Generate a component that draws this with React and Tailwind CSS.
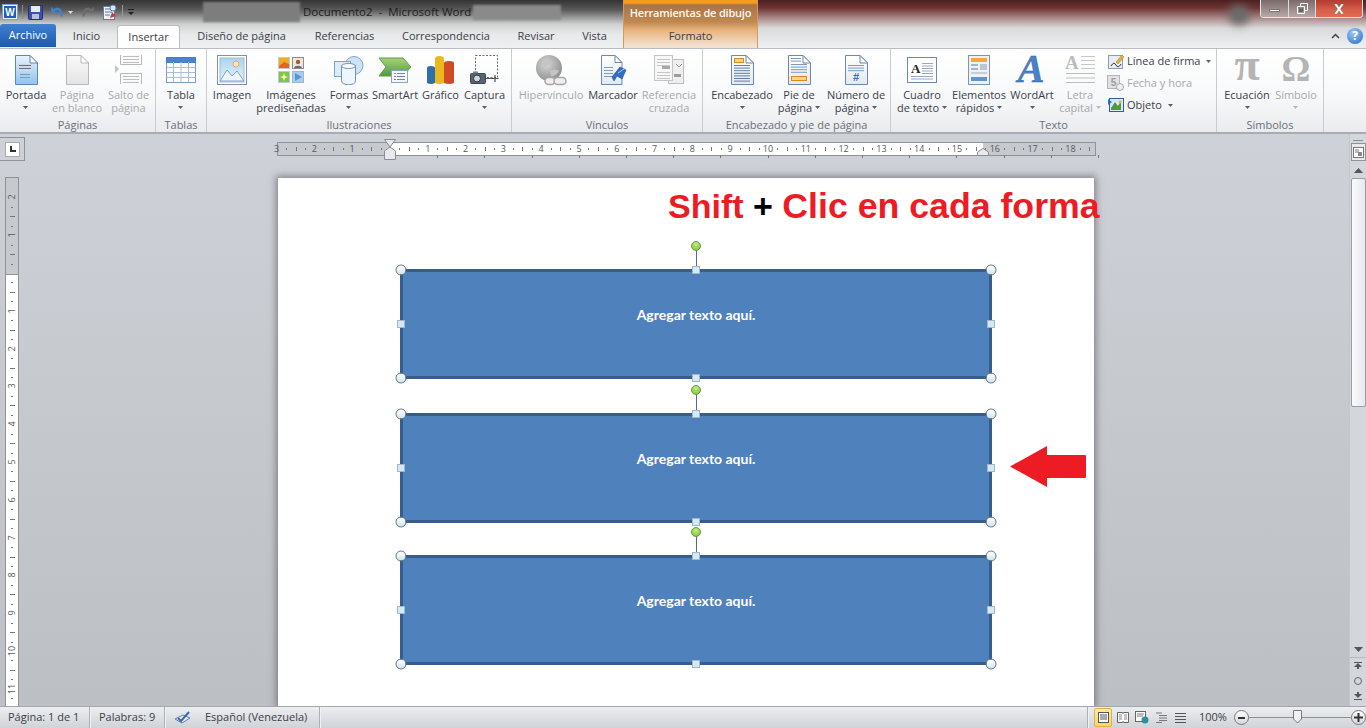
import React from 'react';

const Caret = ({ dim }) => (
  <svg width="5" height="3" viewBox="0 0 5 3" className="inline-block shrink-0">
    <path d="M0 0H5L2.5 3Z" fill={dim ? '#b5b8bc' : '#5a5f66'} />
  </svg>
);

const Defs = () => (
  <svg className="absolute w-0 h-0">
    <defs>
      <linearGradient id="blue" x1="0" y1="0" x2="0" y2="1"><stop offset="0" stopColor="#e6f3fd" /><stop offset="1" stopColor="#8fc4ee" /></linearGradient>
      <linearGradient id="page" x1="0" y1="0" x2="0" y2="1"><stop offset="0" stopColor="#ffffff" /><stop offset="1" stopColor="#e4e9f1" /></linearGradient>
      <linearGradient id="gray" x1="0" y1="0" x2="0" y2="1"><stop offset="0" stopColor="#fafafa" /><stop offset="1" stopColor="#e4e4e4" /></linearGradient>
      <linearGradient id="sky" x1="0" y1="0" x2="0" y2="1"><stop offset="0" stopColor="#a9d3f3" /><stop offset="1" stopColor="#e9f4fc" /></linearGradient>
      <linearGradient id="green" x1="0" y1="0" x2="0" y2="1"><stop offset="0" stopColor="#a8d27a" /><stop offset="1" stopColor="#4f9a3c" /></linearGradient>
      <radialGradient id="globe" cx="0.4" cy="0.35" r="0.7"><stop offset="0" stopColor="#d6d6d6" /><stop offset="1" stopColor="#8d8d8d" /></radialGradient>
    </defs>
  </svg>
);

const Lines = ({ x, y, w, n, gap = 3, color = '#7d8ea6' }) => (
  <>
    {Array.from({ length: n }).map((_, i) => (
      <path key={i} d={`M${x} ${y + i * gap + 0.5}h${w}`} stroke={color} />
    ))}
  </>
);

const Doc = ({ fill = 'url(#page)', stroke = '#6f87a8', children }) => (
  <svg width="24" height="30" viewBox="0 0 24 30">
    <path d="M1.5.5H16L23.5 8V29.5H1.5Z" fill={fill} stroke={stroke} />
    <path d="M16 .5V8H23.5Z" fill="#fff" stroke={stroke} />
    {children}
  </svg>
);

const PortadaIcon = () => (
  <Doc fill="url(#blue)" stroke="#5d88b5">
    <rect x="4" y="9" width="14" height="7" fill="#cfd8e4" />
    <Lines x={5} y={10} w={12} n={2} color="#5b7394" />
    <Lines x={6} y={19} w={10} n={2} color="#7a98bb" />
  </Doc>
);

const BlankIcon = () => <Doc fill="url(#gray)" stroke="#b9b9b9" />;

const BreakIcon = () => (
  <svg width="28" height="30" viewBox="0 0 28 30">
    <path d="M5.5 0V9.5H26.5V0" fill="#fafafa" stroke="#b8b8b8" />
    <Lines x={8} y={1} w={16} n={3} color="#bdbdbd" />
    <path d="M5.5 29V18.5H26.5V29" fill="#fafafa" stroke="#b8b8b8" />
    <Lines x={8} y={21} w={16} n={3} color="#bdbdbd" />
    <path d="M0 10L4 14L0 18Z" fill="#b9c4d0" />
  </svg>
);

const TableIcon = () => (
  <svg width="30" height="26" viewBox="0 0 30 26">
    <rect x=".5" y=".5" width="29" height="25" fill="#fff" stroke="#7d9cc4" />
    <rect x=".5" y=".5" width="29" height="5" fill="#4a84d0" stroke="#4a7cc0" />
    <path d="M.5 10.5H29.5M.5 15.5H29.5M.5 20.5H29.5M7.5 5V25M15 5V25M22.5 5V25" stroke="#a8bdd8" fill="none" />
  </svg>
);

const PictureIcon = () => (
  <svg width="30" height="30" viewBox="0 0 30 30">
    <rect x=".5" y=".5" width="29" height="29" fill="#fff" stroke="#7f93ad" />
    <rect x="3" y="3" width="24" height="24" fill="url(#sky)" stroke="#a3bcd6" />
    <circle cx="19" cy="9" r="3" fill="#fbe3c4" stroke="#e6a868" />
    <path d="M3 26L10 15L15 21L20 16L27 26Z" fill="#eef5fb" stroke="#7fa3c8" />
  </svg>
);

const ClipIcon = () => (
  <svg width="26" height="26" viewBox="0 0 26 26">
    <rect x=".5" y=".5" width="11" height="11" fill="#f4a92e" stroke="#c9c9c9" />
    <path d="M1 9L6 5L11 7V11H1Z" fill="#e8641c" />
    <rect x="14.5" y=".5" width="11" height="11" fill="#efe6dc" stroke="#8d8d8d" />
    <circle cx="20" cy="5" r="2.2" fill="#a85a38" />
    <path d="M16 11C16 8 24 8 24 11Z" fill="#6a6a8a" />
    <rect x=".5" y="14.5" width="11" height="11" fill="#7dc44c" stroke="#c9c9c9" />
    <path d="M6 16L7 19L10 20L7 21L6 24L5 21L2 20L5 19Z" fill="#fff7a8" />
    <rect x="14.5" y="14.5" width="11" height="11" fill="#a9cdf0" stroke="#9ab8d8" />
    <path d="M17 16L24 20L17 24Z" fill="#5a94d8" />
  </svg>
);

const ShapesIcon = () => (
  <svg width="30" height="29" viewBox="0 0 30 29">
    <circle cx="20" cy="9.5" r="9" fill="#cfe3f6" stroke="#7ba3cc" />
    <rect x=".5" y="5.5" width="16" height="15" fill="#dcebf8" stroke="#7ba3cc" />
    <path d="M7.5 10V25C7.5 30 21.5 30 21.5 25V10Z" fill="#eef6fc" stroke="#6b93bd" />
    <ellipse cx="14.5" cy="10" rx="7" ry="2.5" fill="#fff" stroke="#6b93bd" />
  </svg>
);

const SmartArtIcon = () => (
  <svg width="32" height="26" viewBox="0 0 32 26">
    <path d="M0 1H24L32 10L24 19H0L7 10Z" fill="url(#green)" stroke="#5d9a48" />
    <rect x="12.5" y="13.5" width="16" height="12" fill="#f4f7fb" stroke="#8ea3bc" />
    <Lines x={18} y={16} w={8} n={3} color="#6f87a8" />
    <Lines x={15} y={16} w={2} n={3} color="#6f87a8" />
  </svg>
);

const ChartIcon = () => (
  <svg width="29" height="30" viewBox="0 0 29 30">
    <path d="M1 13Q1 11 4.5 11Q9 11 9 13V28Q5 30 1 28Z" fill="#2f6ea8" />
    <path d="M9 4Q9 1 13.5 1Q18 1 18 4V28Q13.5 30 9 28Z" fill="#e8b81c" />
    <path d="M18 8Q18 6 23 6Q28 6 28 8V28Q23 30 18 28Z" fill="#cf4a26" />
  </svg>
);

const CaptureIcon = () => (
  <svg width="29" height="30" viewBox="0 0 29 30">
    <rect x="5.5" y=".5" width="22" height="22" fill="none" stroke="#6b6b6b" strokeDasharray="2 1.5" />
    <rect x=".5" y="18.5" width="15" height="10" rx="1" fill="#5a6470" stroke="#3e464e" />
    <circle cx="7" cy="23.5" r="3.5" fill="#cfd6de" stroke="#2c3238" />
    <rect x="3" y="16.5" width="5" height="2" fill="#7a838c" />
    <path d="M16 23.5H25M25 20V27M21 23.5H28.5" stroke="#555" strokeWidth="1.2" />
  </svg>
);

const LinkIcon = () => (
  <svg width="31" height="31" viewBox="0 0 31 31">
    <circle cx="13" cy="13" r="13" fill="url(#globe)" />
    <path d="M6 8Q12 4 16 7Q12 11 8 12ZM14 16Q20 13 23 16Q19 22 15 21Z" fill="#c4c4c4" />
    <rect x="9" y="22.5" width="10" height="7" rx="3.5" fill="#eee" stroke="#a6a6a6" strokeWidth="1.5" />
    <rect x="18" y="22.5" width="12" height="7" rx="3.5" fill="#eee" stroke="#a6a6a6" strokeWidth="1.5" />
  </svg>
);

const BookmarkIcon = () => (
  <svg width="27" height="30" viewBox="0 0 27 30">
    <path d="M1.5.5H15L22 7.5V29.5H1.5Z" fill="url(#page)" stroke="#6f87a8" />
    <path d="M15 .5V7.5H22Z" fill="#fff" stroke="#6f87a8" />
    <Lines x={4} y={12} w={9} n={4} gap={3} color="#7d9ac0" />
    <path d="M12 22L20 12L26 15L22 24L17 21L14 26Z" fill="#2f6fc4" stroke="#1d4f96" strokeWidth=".6" />
    <path d="M18 18L24 14" stroke="#a9d0f5" />
  </svg>
);

const CrossRefIcon = () => (
  <svg width="30" height="30" viewBox="0 0 30 30">
    <rect x="14.5" y="4.5" width="15" height="24" fill="#efefef" stroke="#bdbdbd" />
    <rect x=".5" y=".5" width="18" height="25" fill="#f7f7f7" stroke="#c4c4c4" />
    <Lines x={3} y={4} w={13} n={3} color="#c6c6c6" />
    <rect x="8" y="11" width="8" height="3" fill="#a8a8a8" />
    <Lines x={3} y={17} w={13} n={3} color="#c6c6c6" />
    <rect x="20" y="19" width="7" height="3" fill="#9c9c9c" />
    <path d="M22 9L25 12L28 9" fill="none" stroke="#a0a0a0" />
  </svg>
);

const HeaderIcon = () => (
  <Doc>
    <rect x="4.5" y="3.5" width="9" height="4" fill="#fbd38a" stroke="#d98a1e" />
    <Lines x={4} y={10} w={16} n={7} gap={2.6} color="#5d7ea8" />
  </Doc>
);

const FooterIcon = () => (
  <Doc>
    <Lines x={4} y={3} w={10} n={2} gap={2.6} color="#7d9ac0" />
    <Lines x={4} y={9} w={16} n={4} gap={2.6} color="#7d9ac0" />
    <rect x="4.5" y="21.5" width="15" height="4" fill="#fbd38a" stroke="#d98a1e" />
  </Doc>
);

const NumberIcon = () => (
  <svg width="24" height="30" viewBox="0 0 24 30">
    <path d="M1.5.5H16L23.5 8V29.5H1.5Z" fill="url(#page)" stroke="#6f87a8" />
    <path d="M16 .5V8H23.5Z" fill="#fff" stroke="#6f87a8" />
    <Lines x={4} y={10} w={16} n={3} gap={2.6} color="#7d9ac0" />
    <text x="12" y="26" textAnchor="middle" fontSize="11" fontWeight="700" fill="#3f6fa8" fontFamily="Liberation Sans, sans-serif">#</text>
  </svg>
);

const TextBoxIcon = () => (
  <svg width="30" height="26" viewBox="0 0 30 26">
    <rect x=".5" y=".5" width="29" height="25" fill="#fff" stroke="#6f87a8" />
    <text x="4" y="16" fontSize="13" fontWeight="700" fill="#222" fontFamily="Liberation Serif, serif">A</text>
    <Lines x={15} y={6} w={11} n={5} gap={2.5} color="#98a9bf" />
    <Lines x={4} y={19} w={22} n={2} gap={2.5} color="#98a9bf" />
  </svg>
);

const QuickIcon = () => (
  <svg width="22" height="30" viewBox="0 0 22 30">
    <rect x=".5" y=".5" width="21" height="29" fill="#eef2f7" stroke="#7f93ad" />
    <rect x="3" y="3" width="16" height="4" fill="#f2a93c" />
    <rect x="3" y="9" width="7" height="2" fill="#a5b5c9" />
    <rect x="3" y="13" width="7" height="2" fill="#a5b5c9" />
    <rect x="12" y="9" width="7" height="6" fill="#b9c6d6" />
    <rect x="3" y="17" width="16" height="2" fill="#c4cfdc" />
    <rect x="3" y="22" width="16" height="4" fill="#5d95d6" />
  </svg>
);

const WordArtIcon = () => (
  <svg width="26" height="30" viewBox="0 0 26 30" className="overflow-visible -mt-[2px]">
    <text x="12" y="28" textAnchor="middle" fontSize="40" fontWeight="700" fontStyle="italic" fill="#4a80c8" stroke="#2d5c9e" strokeWidth=".4" fontFamily="Liberation Serif, serif">A</text>
  </svg>
);

const DropCapIcon = () => (
  <svg width="31" height="31" viewBox="0 0 31 31" className="overflow-visible">
    <text x="0" y="14" fontSize="19" fontWeight="700" fill="#bcbcbc" fontFamily="Liberation Serif, serif">A</text>
    <Lines x={16} y={1} w={14} n={4} gap={4} color="#c8c8c8" />
    <Lines x={1} y={18} w={29} n={3} gap={4.5} color="#bdbdbd" />
  </svg>
);

const SignIcon = () => (
  <svg width="16" height="15" viewBox="0 0 16 15">
    <rect x=".5" y="1.5" width="14" height="13" fill="#e6edf5" stroke="#8a9db5" />
    <path d="M3 12Q6 7 8 11T13 10" stroke="#333" fill="none" />
    <path d="M8 8L14 1L16 3L10 10Z" fill="#e2b13c" stroke="#9c7a20" strokeWidth=".5" />
  </svg>
);

const DateIcon = () => (
  <svg width="17" height="16" viewBox="0 0 17 16">
    <rect x=".5" y=".5" width="12" height="13" fill="#e2e2e2" stroke="#b5b5b5" />
    <text x="6.5" y="11" textAnchor="middle" fontSize="10" fontWeight="700" fill="#9c9c9c" fontFamily="Liberation Sans, sans-serif">5</text>
    <circle cx="13" cy="12" r="3.5" fill="#f0f0f0" stroke="#a8a8a8" />
  </svg>
);

const ObjectIcon = () => (
  <svg width="16" height="14" viewBox="0 0 16 14">
    <rect x="1.5" y=".5" width="14" height="13" fill="#dbe9f7" stroke="#2f5f9e" />
    <path d="M0 1L4 4L0 7Z" fill="#2f6fc4" />
    <path d="M3 10L7 4L10 8L13 3V12H3Z" fill="#4f9a3c" />
    <circle cx="12" cy="4" r="1.5" fill="#e2b13c" />
  </svg>
);

const Glyph = ({ c, size }) => (
  <span className={`font-['Liberation_Serif',serif] font-bold leading-[36px] text-[#b4b4b4] ${size}`}>{c}</span>
);

const RibbonButton = ({ w, icon, lines, caret, dim }) => (
  <div className={`flex flex-col items-center shrink-0 ${w}`}>
    <div className="h-[36px] flex items-center justify-center">{icon}</div>
    <div className={`flex flex-col items-center text-[11px] leading-[13px] whitespace-nowrap ${dim ? 'text-[#a6a9ad]' : 'text-[#3b4048]'}`}>
      <span>{lines[0]}</span>
      {lines[1] ? (
        <span className="flex items-center gap-[3px]">{lines[1]}{caret && <Caret dim={dim} />}</span>
      ) : (
        caret && <span className="h-[13px] flex items-center"><Caret dim={dim} /></span>
      )}
    </div>
  </div>
);

const Group = ({ w, label, pad = '', children }) => (
  <div className={`flex flex-col shrink-0 border-r border-[#c8ccd2] ${w}`}>
    <div className={`flex flex-1 pt-[3px] ${pad}`}>{children}</div>
    <div className="h-[15px] text-center text-[11px] leading-[15px] text-[#6a7079] whitespace-nowrap">{label}</div>
  </div>
);

const SmallRow = ({ icon, text, dim, caret }) => (
  <div className={`flex items-center h-[22px] gap-[3px] text-[11px] whitespace-nowrap ${dim ? 'text-[#a6a9ad]' : 'text-[#3b4048]'}`}>
    <span className="w-[17px] flex justify-center">{icon}</span>
    <span>{text}</span>
    {caret && <span className="ml-[3px] flex"><Caret /></span>}
  </div>
);

const Tab = ({ w, children }) => (
  <div className={`h-full flex items-center justify-center text-[11px] text-[#3b4048] whitespace-nowrap ${w}`}>{children}</div>
);

const TitleBar = () => (
  <div className="flex h-[48px] shrink-0">
    <div className="w-[623px] shrink-0 flex flex-col bg-[linear-gradient(to_bottom,#343434_0px,#5a5a5a_10px,#cfcfcf_24px,#e6e8ea_34px,#eef0f2_48px)]">
      <div className="h-[24px] flex items-center text-[11.5px] text-[#1e1e1e]">
        <div className="w-[203px] shrink-0 flex items-center pl-[2px]">
          <svg width="16" height="16" viewBox="0 0 16 16">
            <rect x=".5" y=".5" width="15" height="15" fill="#e9f1fb" stroke="#7ea2d4" />
            <rect x="2" y="2" width="12" height="12" fill="#1f5fb8" />
            <text x="8" y="12" textAnchor="middle" fontSize="10" fontWeight="700" fill="#fff" fontFamily="Liberation Sans, sans-serif">W</text>
          </svg>
          <span className="ml-[4px] w-px h-[14px] bg-[#888]" />
          <svg className="ml-[5px]" width="15" height="15" viewBox="0 0 15 15">
            <rect x=".5" y=".5" width="14" height="14" rx="1" fill="#3d4fa8" stroke="#25307a" />
            <rect x="3" y="1" width="9" height="6" fill="#e6eaf5" />
            <rect x="4" y="9" width="7" height="5" fill="#b9c0dc" />
          </svg>
          <svg className="ml-[7px]" width="14" height="14" viewBox="0 0 14 14">
            <path d="M1 2V8H7L5 6C8 4 10 6 10 10L12 12C14 6 10 0 3.5 4Z" fill="#3e7fd0" />
          </svg>
          <svg className="ml-[4px]" width="5" height="3" viewBox="0 0 5 3"><path d="M0 0H5L2.5 3Z" fill="#ddd" /></svg>
          <svg className="ml-[9px]" width="13" height="14" viewBox="0 0 13 14">
            <path d="M12 2V8H6L8 6C5 4 3 6 3 10L1 12C-1 6 3 0 9.5 4Z" fill="#6c6c6c" />
          </svg>
          <svg className="ml-[7px]" width="16" height="16" viewBox="0 0 16 16">
            <rect x="1.5" y="2.5" width="11" height="13" fill="#f0f2f5" stroke="#707a88" />
            <path d="M3 5H10M3 8H10M3 11H8" stroke="#4d78b0" />
            <circle cx="11" cy="4" r="3" fill="#d8e6f5" stroke="#5680b4" />
            <path d="M8 14L10 8L14 12Z" fill="#c93a3a" />
          </svg>
          <span className="ml-[4px] w-px h-[14px] bg-[#999]" />
          <svg className="ml-[5px]" width="6" height="6" viewBox="0 0 6 6"><path d="M0 0H6V1H0ZM0 3H6L3 6Z" fill="#222" /></svg>
        </div>
        <div className="w-[97px] h-[20px] shrink-0 bg-[#7d7d7d] blur-[1px]" />
        <span className="ml-[3px] whitespace-pre">Documento2  -  Microsoft Word</span>
        <div className="ml-[2px] w-[88px] h-[15px] shrink-0 bg-[#8a8a8a] blur-[1px]" />
      </div>
      <div className="h-[24px] flex">
        <div className="w-[56px] h-[23px] rounded-t-[3px] bg-[linear-gradient(to_bottom,#3f80cf,#1d5ab0)] flex items-center justify-center text-[11px] text-white">Archivo</div>
        <div className="flex items-center">
          <div className="w-[61px] flex justify-center text-[11px] text-[#3b4048]">Inicio</div>
          <div className="w-[63px] h-[24px] mt-[1px] rounded-t-[3px] border border-b-0 border-[#b9bdc3] bg-[linear-gradient(to_bottom,#fdfdfd,#ffffff)] flex items-center justify-center text-[11px] text-[#3b4048]">Insertar</div>
          <div className="flex h-full ml-[2px]">
            <Tab w="w-[119px]">Diseño de página</Tab>
            <Tab w="w-[87px]">Referencias</Tab>
            <Tab w="w-[116px]">Correspondencia</Tab>
            <Tab w="w-[64px]">Revisar</Tab>
            <Tab w="w-[53px]">Vista</Tab>
          </div>
        </div>
      </div>
    </div>
    <div className="w-[135px] shrink-0 flex flex-col border-x border-[#d89a5c] bg-[linear-gradient(to_bottom,#f59d1a_0px,#f59d1a_3px,#a8744a_5px,#c08850_22px,#e8b27c_30px,#f2e2d0_46px)]">
      <div className="h-[24px] pt-[3px] flex items-center justify-center text-[11px] font-semibold tracking-[-0.2px] text-[#fff7ee] whitespace-nowrap">Herramientas de dibujo</div>
      <div className="h-[24px] flex items-center justify-center text-[11px] text-[#3b4048]">Formato</div>
    </div>
    <div className="relative flex-1 flex flex-col bg-[linear-gradient(to_bottom,#4c2020_0px,#6e3434_8px,#b59a9a_20px,#dadada_28px,#eef0f2_48px)]">
      <div className="absolute left-[470px] top-[5px] w-[22px] h-[20px] rounded-full bg-[#6a6a6a] blur-[4px]" />
      <div className="relative h-[24px] flex justify-end pr-[3px]">
        <div className="w-[103px] h-[18px] flex rounded-b-[4px] border border-t-0 border-[#e8e8e8] overflow-hidden">
          <div className="w-[28px] flex items-center justify-center bg-[linear-gradient(to_bottom,#7c6a6a,#b8a8a8)] border-r border-[#ddd]">
            <span className="mt-[4px] w-[11px] h-[3px] bg-white border border-[#777]" />
          </div>
          <div className="w-[27px] flex items-center justify-center bg-[linear-gradient(to_bottom,#7c6a6a,#b8a8a8)] border-r border-[#ddd]">
            <svg width="11" height="11" viewBox="0 0 11 11"><path d="M3.5 3V.5H10.5V7.5H8M.5 3.5H7.5V10.5H.5Z" fill="none" stroke="#fff" /><path d="M2 5.5H6V9H2Z" fill="#666" /></svg>
          </div>
          <div className="flex-1 flex items-center justify-center bg-[linear-gradient(to_bottom,#b23a30,#d8604c_60%,#e26a50)]">
            <svg width="12" height="10" viewBox="0 0 12 10"><path d="M1 0H4L6 3L8 0H11L7.5 5L11 10H8L6 7L4 10H1L4.5 5Z" fill="#fff" stroke="#555" strokeWidth=".4" /></svg>
          </div>
        </div>
      </div>
      <div className="relative h-[24px] flex items-center justify-end pr-[3px] gap-[7px]">
        <svg width="9" height="6" viewBox="0 0 9 6"><path d="M1 5L4.5 1.5L8 5" fill="none" stroke="#444" strokeWidth="1.5" /></svg>
        <div className="w-[16px] h-[16px] rounded-full bg-[radial-gradient(circle_at_40%_30%,#9cc8f5,#2668c8)] flex items-center justify-center text-[12px] font-bold leading-none text-white">?</div>
      </div>
    </div>
  </div>
);

const Ribbon = () => (
  <div className="flex h-[86px] shrink-0 border-t border-[#b9bdc3] border-b-2 border-b-[#a9adb3] bg-[linear-gradient(to_bottom,#ffffff,#f8f9fa_55%,#e9ebee)]">
    <Group w="w-[156px]" label="Páginas">
      <RibbonButton w="w-[52px]" icon={<PortadaIcon />} lines={['Portada']} caret />
      <RibbonButton w="w-[50px]" icon={<BlankIcon />} lines={['Página', 'en blanco']} dim />
      <RibbonButton w="w-[53px]" icon={<BreakIcon />} lines={['Salto de', 'página']} dim />
    </Group>
    <Group w="w-[51px]" label="Tablas">
      <RibbonButton w="w-[50px]" icon={<TableIcon />} lines={['Tabla']} caret />
    </Group>
    <Group w="w-[305px]" label="Ilustraciones">
      <RibbonButton w="w-[50px]" icon={<PictureIcon />} lines={['Imagen']} />
      <RibbonButton w="w-[68px]" icon={<ClipIcon />} lines={['Imágenes', 'prediseñadas']} />
      <RibbonButton w="w-[48px]" icon={<ShapesIcon />} lines={['Formas']} caret />
      <RibbonButton w="w-[44px]" icon={<SmartArtIcon />} lines={['SmartArt']} />
      <RibbonButton w="w-[47px]" icon={<ChartIcon />} lines={['Gráfico']} />
      <RibbonButton w="w-[41px]" icon={<CaptureIcon />} lines={['Captura']} caret />
    </Group>
    <Group w="w-[191px]" label="Vínculos">
      <RibbonButton w="w-[78px]" icon={<LinkIcon />} lines={['Hipervínculo']} dim />
      <RibbonButton w="w-[46px]" icon={<BookmarkIcon />} lines={['Marcador']} />
      <RibbonButton w="w-[66px]" icon={<CrossRefIcon />} lines={['Referencia', 'cruzada']} dim />
    </Group>
    <Group w="w-[188px]" label="Encabezado y pie de página" pad="pl-[10px]">
      <RibbonButton w="w-[58px]" icon={<HeaderIcon />} lines={['Encabezado']} caret />
      <RibbonButton w="w-[56px]" icon={<FooterIcon />} lines={['Pie de', 'página']} caret />
      <RibbonButton w="w-[58px]" icon={<NumberIcon />} lines={['Número de', 'página']} caret />
    </Group>
    <Group w="w-[326px]" label="Texto" pad="pl-[5px]">
      <RibbonButton w="w-[52px]" icon={<TextBoxIcon />} lines={['Cuadro', 'de texto']} caret />
      <RibbonButton w="w-[62px]" icon={<QuickIcon />} lines={['Elementos', 'rápidos']} caret />
      <RibbonButton w="w-[44px]" icon={<WordArtIcon />} lines={['WordArt']} caret />
      <RibbonButton w="w-[52px]" icon={<DropCapIcon />} lines={['Letra', 'capital']} caret dim />
      <div className="flex flex-col pl-[1px] -mt-[2px]">
        <SmallRow icon={<SignIcon />} text="Línea de firma" caret />
        <SmallRow icon={<DateIcon />} text="Fecha y hora" dim />
        <SmallRow icon={<ObjectIcon />} text="Objeto" caret />
      </div>
    </Group>
    <Group w="w-[107px]" label="Símbolos" pad="pl-[6px]">
      <RibbonButton w="w-[48px]" icon={<span className="-mt-[8px]"><Glyph c="π" size="text-[46px]" /></span>} lines={['Ecuación']} caret />
      <RibbonButton w="w-[50px]" icon={<span className="-mt-[3px]"><Glyph c="Ω" size="text-[36px]" /></span>} lines={['Símbolo']} caret dim />
    </Group>
  </div>
);

const CM = 37.8;
const hCm = Array.from({ length: 22 }, (_, i) => i - 3);
const vCm = Array.from({ length: 14 }, (_, i) => i - 2);

const HRuler = () => (
  <div className="relative w-[819px] h-[14px] mt-[8px] shrink-0 border border-[#8f9297] bg-[#c6c9ce] text-[#55595f] text-[9px] leading-[12px]">
    <div className="absolute left-[112px] top-0 w-[593px] h-full bg-white" />
    {hCm.map((c) => (
      <React.Fragment key={c}>
        {c !== 0 && (
          <span className="absolute top-0 w-[14px] -ml-[7px] text-center" style={{ left: 112 + c * CM }}>{Math.abs(c)}</span>
        )}
        {[0.25, 0.5, 0.75].filter((f) => (c + f) * CM < 702).map((f) => (
          <span
            key={f}
            className={`absolute bg-[#777] w-px ${f === 0.5 ? 'top-[4px] h-[4px]' : 'top-[5px] h-[2px]'}`}
            style={{ left: 112 + (c + f) * CM }}
          />
        ))}
      </React.Fragment>
    ))}
    <svg className="absolute left-[106px] -top-[4px]" width="12" height="21" viewBox="0 0 12 21">
      <path d="M.5.5H11.5L6 8L11.5 12V20.5H.5V12L6 8Z" fill="#e8eaee" stroke="#8a8d92" />
    </svg>
    <svg className="absolute left-[699px] top-[5px]" width="12" height="8" viewBox="0 0 12 8">
      <path d="M.5 7.5V4L6 .5L11.5 4V7.5Z" fill="#e8eaee" stroke="#8a8d92" />
    </svg>
    {Array.from({ length: 15 }, (_, i) => i + 1).map((i) => (
      <span key={i} className="absolute top-[12px] w-px h-[3px] bg-[#777]" style={{ left: 112 + i * 47.2 }} />
    ))}
  </div>
);

const VRuler = () => (
  <div className="relative w-[14px] h-[530px] -mt-px overflow-hidden border border-b-0 border-[#8f9297] bg-white text-[#55595f] text-[9px] leading-[12px]">
    <div className="absolute left-0 top-0 w-full h-[97px] bg-[#c6c9ce] border-b border-[#8f9297]" />
    {vCm.map((c) => (
      <React.Fragment key={c}>
        {c !== 0 && (
          <span className="absolute left-0 w-full h-[12px] -mt-[6px] flex items-center justify-center -rotate-90" style={{ top: 95 + c * CM }}>{Math.abs(c)}</span>
        )}
        {[0.25, 0.5, 0.75].map((f) => (
          <span
            key={f}
            className={`absolute bg-[#777] h-px ${f === 0.5 ? 'left-[4px] w-[5px]' : 'left-[5px] w-[2px]'}`}
            style={{ top: 95 + (c + f) * CM }}
          />
        ))}
      </React.Fragment>
    ))}
  </div>
);

const Handle = ({ pos, round }) => (
  <span
    className={`absolute -translate-x-1/2 -translate-y-1/2 ${pos} ${
      round
        ? 'w-[11px] h-[11px] rounded-full border border-[#66757f] bg-[linear-gradient(to_bottom,#ffffff,#cfe4ec)]'
        : 'w-[8px] h-[8px] border border-[#9fb9cc] bg-[#d6e8f3]'
    }`}
  />
);

const Shape = ({ mt }) => (
  <div className={`relative w-[590px] h-[108px] ${mt} bg-[#4f81bd] outline-[3px] -outline-offset-[2px] outline-[#385d8a]`}>
    <div className="pt-[36px] text-center font-['Lato',sans-serif] font-bold text-[14px] leading-[17px] text-white">Agregar texto aquí.</div>
    <span className="absolute left-[295px] -top-[22px] w-px h-[22px] bg-[#4f6c80]" />
    <span className="absolute left-[295px] -top-[24px] -translate-x-1/2 -translate-y-1/2 w-[10px] h-[10px] rounded-full border border-[#6d8f4e] bg-[radial-gradient(circle_at_50%_30%,#c4ee7c,#76c428)]" />
    <Handle round pos="left-0 top-0" />
    <Handle round pos="left-full top-0" />
    <Handle round pos="left-0 top-full" />
    <Handle round pos="left-full top-full" />
    <Handle pos="left-1/2 top-0" />
    <Handle pos="left-1/2 top-full" />
    <Handle pos="left-0 top-[54px]" />
    <Handle pos="left-full top-[54px]" />
  </div>
);

const Page = () => (
  <div className="relative w-[816px] h-[528px] ml-[259px] bg-white shadow-[0_0_7px_2px_rgba(70,70,75,0.55)]">
    <div className="h-[92px] pl-[390px] pt-[8px] font-['Liberation_Sans',sans-serif] font-bold text-[34px] leading-[40px] whitespace-pre text-[#ed1c24]">
      Shift <span className="text-black">+</span> <span className="text-[35.7px]">Clic en cada forma</span>
    </div>
    <div className="pl-[123px]">
      <Shape />
      <Shape mt="mt-[36px]" />
      <Shape mt="mt-[34px]" />
    </div>
    <svg className="absolute left-[732px] top-[268px]" width="76" height="41" viewBox="0 0 76 41">
      <path d="M0 20.5L37 0V9H75Q76 9 76 10V31Q76 32 75 32H37V41Z" fill="#ed1c24" />
    </svg>
  </div>
);

const Scrollbar = () => (
  <div className="w-[17px] shrink-0 flex flex-col items-center bg-[#d3d6db] border-l border-[#c3c6cb]">
    <span className="mt-[6px] w-[10px] h-px bg-[#8d9096]" />
    <div className="mt-[2px] w-[15px] h-[18px] border border-[#8f9297] bg-[#e6e8eb] flex items-center justify-center">
      <svg width="11" height="11" viewBox="0 0 11 11"><rect x=".5" y=".5" width="10" height="10" fill="#fff" stroke="#777" /><path d="M2 2H6V6H2Z" fill="#bbb" /><path d="M5 5H9V9H5Z" fill="#888" /></svg>
    </div>
    <svg className="mt-[7px]" width="9" height="5" viewBox="0 0 9 5"><path d="M0 5L4.5 0L9 5Z" fill="#555" /></svg>
    <div className="mt-[5px] w-[15px] h-[229px] rounded-[2px] border border-[#9a9da2] bg-[linear-gradient(to_right,#fafbfc,#e6e8ec)]" />
    <div className="flex-1" />
    <svg width="9" height="5" viewBox="0 0 9 5"><path d="M0 0H9L4.5 5Z" fill="#555" /></svg>
    <span className="mt-[5px] w-full h-px bg-[#b6b9be]" />
    <svg className="mt-[3px]" width="8" height="9" viewBox="0 0 8 9"><path d="M0 1H8V2H0ZM0 6L4 2L8 6H5V8H3V6Z" fill="#555" /></svg>
    <span className="mt-[7px] w-[8px] h-[8px] rounded-full border border-[#666]" />
    <svg className="mt-[7px] mb-[5px]" width="8" height="9" viewBox="0 0 8 9"><path d="M0 7H8V8H0ZM0 2L4 6L8 2H5V0H3V2Z" fill="#555" /></svg>
  </div>
);

const Body = () => (
  <div className="flex-1 min-h-0 flex overflow-hidden">
    <div className="flex-1 flex flex-col bg-[linear-gradient(to_bottom,#ced1d7,#bcbfc3)]">
      <div className="flex h-[44px] shrink-0">
        <div className="mt-[3px] w-[25px] h-[24px] border border-l-0 border-[#8f9297] flex items-center justify-center">
          <div className="w-[15px] h-[15px] bg-white border border-[#aaa] flex items-center justify-center">
            <svg width="7" height="7" viewBox="0 0 7 7"><path d="M1 0H3V4H7V6H1Z" fill="#333" /></svg>
          </div>
        </div>
        <div className="ml-[252px]"><HRuler /></div>
      </div>
      <div className="flex pl-[5px]">
        <VRuler />
        <Page />
      </div>
    </div>
    <Scrollbar />
  </div>
);

const Sep = () => <span className="w-px h-full bg-[#aeb1b6] border-r border-[#f0f1f3] box-content" />;

const StatusBar = () => (
  <div className="h-[22px] shrink-0 flex items-center border-t border-[#a4a7ac] bg-[linear-gradient(to_bottom,#eceef1,#d0d3d7)] text-[11px] text-[#3b4048]">
    <span className="w-[89px] pl-[8px] whitespace-nowrap">Página: 1 de 1</span>
    <Sep />
    <span className="w-[73px] pl-[8px] whitespace-nowrap">Palabras: 9</span>
    <Sep />
    <div className="w-[39px] pl-[8px] shrink-0">
      <svg width="17" height="14" viewBox="0 0 17 14">
        <path d="M1 8L8 12L16 7L9 4Z" fill="#e8eef6" stroke="#5a7fb0" />
        <path d="M4 7L7 10L15 1" fill="none" stroke="#3f68a8" strokeWidth="2" />
      </svg>
    </div>
    <span className="w-[114px] whitespace-nowrap">Español (Venezuela)</span>
    <Sep />
    <div className="flex-1" />
    <Sep />
    <div className="ml-[5px] w-[18px] h-[19px] rounded-[2px] border border-[#e0b040] bg-[linear-gradient(to_bottom,#fdeba8,#fbd568)] flex items-center justify-center">
      <svg width="11" height="11" viewBox="0 0 11 11"><rect x=".5" y=".5" width="10" height="10" fill="#fff" stroke="#555" /><path d="M2 3H9M2 5H9M2 7H9" stroke="#555" /></svg>
    </div>
    <svg className="ml-[5px]" width="12" height="11" viewBox="0 0 12 11"><path d="M.5.5H5.5L6 1.5L6.5.5H11.5V10.5H6.5L6 9.5L5.5 10.5H.5Z" fill="#fff" stroke="#666" /><path d="M2 3H5M2 5H5M2 7H5M7 3H10M7 5H10M7 7H10" stroke="#888" /></svg>
    <svg className="ml-[6px]" width="14" height="13" viewBox="0 0 14 13"><rect x=".5" y=".5" width="10" height="10" fill="#fff" stroke="#666" /><path d="M2 3H9M2 5H8" stroke="#777" /><circle cx="10" cy="9" r="3.5" fill="#2f8f9c" /></svg>
    <svg className="ml-[7px]" width="11" height="11" viewBox="0 0 11 11"><path d="M0 1H6M3 3.5H11M3 6H11M3 8.5H11M0 10.5H6" stroke="#777" /></svg>
    <svg className="ml-[8px]" width="11" height="10" viewBox="0 0 11 10"><path d="M0 .5H11M0 3.5H11M0 6.5H11M0 9.5H11" stroke="#555" /></svg>
    <span className="ml-[13px] w-[27px] whitespace-nowrap">100%</span>
    <div className="ml-[8px] w-[15px] h-[15px] rounded-full border border-[#77797d] bg-[linear-gradient(to_bottom,#fff,#d5d7da)] flex items-center justify-center"><span className="w-[7px] h-[2px] bg-[#333]" /></div>
    <div className="relative w-[102px] h-px bg-[#8d9095]">
      <svg className="absolute left-[44px] -top-[7px]" width="9" height="14" viewBox="0 0 9 14"><path d="M.5.5H8.5V9L4.5 13L.5 9Z" fill="#f2f3f5" stroke="#77797d" /></svg>
    </div>
    <div className="w-[15px] h-[15px] rounded-full border border-[#77797d] bg-[linear-gradient(to_bottom,#fff,#d5d7da)] flex items-center justify-center">
      <svg width="9" height="9" viewBox="0 0 9 9"><path d="M3.5 0H5.5V3.5H9V5.5H5.5V9H3.5V5.5H0V3.5H3.5Z" fill="#333" /></svg>
    </div>
  </div>
);

export default function App() {
  return (
    <div className="w-[1366px] h-[728px] flex flex-col overflow-hidden font-['Open_Sans',sans-serif]">
      <Defs />
      <TitleBar />
      <Ribbon />
      <Body />
      <StatusBar />
    </div>
  );
}
